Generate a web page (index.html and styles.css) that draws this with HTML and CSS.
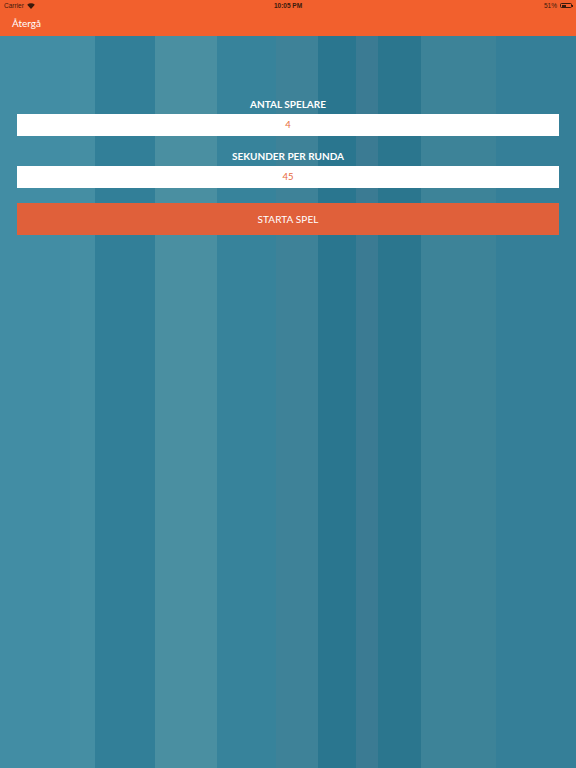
FILE: index.html
```html
<!DOCTYPE html>
<html lang="sv">
<head>
<meta charset="utf-8">
<title>Spel</title>
<link rel="stylesheet" href="styles.css">
</head>
<body>
<div class="screen">
  <header class="top">
    <div class="status">
      <div class="status-left">
        <span>Carrier</span>
        <svg class="wifi" width="8" height="6" viewBox="0 0 8 6"><path d="M4 6 L0.2 1.8 A5.6 5.6 0 0 1 7.8 1.8 Z" fill="#3a1a0c"/></svg>
      </div>
      <div class="status-time">10:05 PM</div>
      <div class="status-right">
        <span>51%</span>
        <span class="battery"><span class="battery-fill"></span></span>
      </div>
    </div>
    <nav class="nav">
      <span class="back">Återgå</span>
    </nav>
  </header>
  <main class="content">
    <label class="label">ANTAL SPELARE</label>
    <div class="field">4</div>
    <label class="label">SEKUNDER PER RUNDA</label>
    <div class="field">45</div>
    <button class="start">STARTA SPEL</button>
  </main>
</div>
</body>
</html>
```
FILE: styles.css
```css
html, body {
  margin: 0;
  padding: 0;
}
body {
  width: 576px;
  height: 768px;
  overflow: hidden;
  font-family: Lato, "Open Sans", "Liberation Sans", sans-serif;
}
.screen {
  width: 576px;
  height: 768px;
  display: flex;
  flex-direction: column;
  background: linear-gradient(to right,
    #428da4 0, #428da4 70px,
    #458ea3 70px, #458ea3 95px,
    #327f98 95px, #327f98 155px,
    #4a8fa1 155px, #4a8fa1 217px,
    #37839b 217px, #37839b 276px,
    #3e8298 276px, #3e8298 318px,
    #2a768f 318px, #2a768f 356px,
    #3b7b93 356px, #3b7b93 378px,
    #2b768e 378px, #2b768e 421px,
    #3d8398 421px, #3d8398 496px,
    #357f98 496px, #357f98 576px);
}
.top {
  background: #f2602d;
  height: 36px;
  display: flex;
  flex-direction: column;
}
.status {
  height: 11px;
  display: flex;
  align-items: center;
  justify-content: space-between;
  padding: 0 4px;
  font-family: "Liberation Sans", Arial, sans-serif;
  font-size: 6.5px;
  color: #3a1a0c;
  position: relative;
}
.status-left {
  display: flex;
  align-items: center;
  gap: 3px;
}
.wifi {
  display: block;
}
.status-time {
  position: absolute;
  left: 0;
  right: 0;
  text-align: center;
  font-weight: bold;
}
.status-right {
  display: flex;
  align-items: center;
  gap: 3px;
}
.battery {
  width: 12px;
  height: 5px;
  border: 0.8px solid #3a1a0c;
  border-radius: 1.5px;
  padding: 0.5px;
  display: flex;
  box-sizing: border-box;
  position: relative;
}
.battery::after {
  content: "";
  position: absolute;
  right: -2px;
  top: 1px;
  width: 1px;
  height: 2px;
  background: #3a1a0c;
}
.battery-fill {
  width: 50%;
  background: #3a1a0c;
}
.nav {
  flex: 1;
  display: flex;
  align-items: center;
  padding: 0 12px 2px;
}
.back {
  color: #fff;
  font-size: 10px;
}
.content {
  padding: 62px 17px 0;
  display: flex;
  flex-direction: column;
}
.label {
  display: block;
  text-align: center;
  color: #fff;
  font-weight: 700;
  font-size: 10px;
  line-height: 12px;
  margin-bottom: 4px;
}
.field {
  background: #fff;
  height: 22px;
  line-height: 22px;
  text-align: center;
  color: #e76a3c;
  font-size: 9.5px;
  margin-bottom: 14px;
}
.start {
  margin-top: 1px;
  height: 32px;
  border: none;
  background: #e0603a;
  color: #fff;
  font-family: Lato, "Open Sans", "Liberation Sans", sans-serif;
  font-size: 10px;
  letter-spacing: 0.1px;
  padding: 0;
}
```
